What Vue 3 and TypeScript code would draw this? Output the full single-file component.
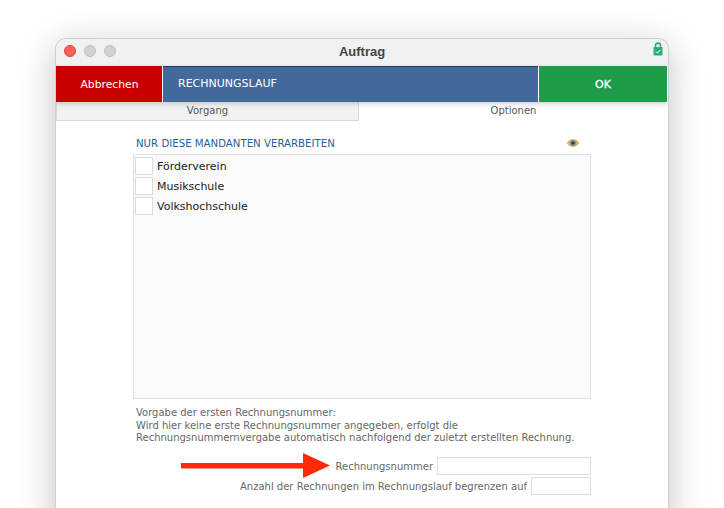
<script setup lang="ts">
const clients: string[] = ['Förderverein', 'Musikschule', 'Volkshochschule']
</script>

<template>
  <div class="page">
    <div class="window">
      <div class="titlebar">
        <div class="lights">
          <span class="light red"></span>
          <span class="light"></span>
          <span class="light"></span>
        </div>
        <div class="title">Auftrag</div>
        <svg class="lock" width="10" height="14" viewBox="0 0 10 14">
          <path d="M2.5 6V3.6a2.5 2.5 0 0 1 5 0V6" fill="none" stroke="#2fae78" stroke-width="1.6" />
          <rect x="0.5" y="5" width="9" height="8.6" rx="0.8" fill="#2fae78" />
          <path d="M3 9.6l1.5 1.5L7.2 8" fill="none" stroke="#fff" stroke-width="1" />
        </svg>
      </div>

      <div class="toolbar">
        <button class="cancel">Abbrechen</button>
        <div class="caption">RECHNUNGSLAUF</div>
        <button class="ok">OK</button>
      </div>

      <div class="tabs">
        <div class="tab inactive">Vorgang</div>
        <div class="tab">Optionen</div>
      </div>

      <div class="content">
        <div class="heading">
          <span>NUR DIESE MANDANTEN VERARBEITEN</span>
          <svg class="eye" width="14" height="10" viewBox="0 0 14 10">
            <path d="M0.5 5C3 1.6 5 1 7 1s4 .6 6.500 4C11 8.400 9 9 7 9S3 8.400 .5 5z" fill="#e0b36a" />
            <circle cx="7" cy="5" r="2.800" fill="#5d7f8c" />
            <circle cx="7" cy="5" r="1.200" fill="#26363d" />
          </svg>
        </div>

        <div class="list">
          <div v-for="client in clients" :key="client" class="row">
            <span class="check"></span>
            <span>{{ client }}</span>
          </div>
        </div>

        <p class="hint">
          Vorgabe der ersten Rechnungsnummer:<br />
          Wird hier keine erste Rechnungsnummer angegeben, erfolgt die<br />
          Rechnungsnummernvergabe automatisch nachfolgend der zuletzt erstellten Rechnung.
        </p>

        <div class="fields">
          <svg class="arrow" width="150" height="25" viewBox="0 0 150 25">
            <path d="M0 10h122V0l27 12.500L122 25V15.500H0z" fill="#ff2a06" />
          </svg>
          <div class="field">
            <label>Rechnungsnummer</label>
            <input class="input wide" type="text" />
          </div>
          <div class="field">
            <label>Anzahl der Rechnungen im Rechnungslauf begrenzen auf</label>
            <input class="input small" type="text" />
          </div>
        </div>
      </div>
    </div>
  </div>
</template>

<style>
html,
body {
  margin: 0;
  background: #fff;
}
</style>

<style scoped>
.page {
  width: 724px;
  height: 508px;
  overflow: hidden;
  padding: 38px 55px 0;
  box-sizing: border-box;
  font-family: "DejaVu Sans", Verdana, sans-serif;
}

.window {
  height: 510px;
  box-sizing: border-box;
  background: #fff;
  border-radius: 11px 11px 0 0;
  border: 1px solid #cfcfcf;
  border-bottom: none;
  box-shadow: 0 8px 36px rgba(0, 0, 0, 0.24);
  overflow: hidden;
  display: flex;
  flex-direction: column;
}

.titlebar {
  height: 27px;
  flex: none;
  background: #f0f1f3;
  display: flex;
  align-items: center;
  justify-content: center;
  position: relative;
}

.lights {
  position: absolute;
  left: 8px;
  top: 6px;
  display: flex;
  gap: 8px;
}

.light {
  width: 12px;
  height: 12px;
  box-sizing: border-box;
  border-radius: 50%;
  background: #d0d1d3;
  border: 0.5px solid #bcbcbc;
}

.light.red {
  background: #fe5f57;
  border-color: #e0443e;
}

.title {
  font-family: "Liberation Sans", Arial, sans-serif;
  font-size: 13px;
  font-weight: bold;
  color: #444;
  margin-bottom: 2px;
}

.lock {
  position: absolute;
  right: 5px;
  top: 3px;
}

.toolbar {
  height: 36px;
  flex: none;
  display: flex;
  background: #fff;
  box-shadow: 0 2px 5px rgba(0, 0, 0, 0.18);
  position: relative;
  z-index: 1;
  gap: 1px;
}

.cancel,
.ok {
  border: none;
  border-top: 1px solid transparent;
  padding: 0;
  color: #fff;
  font-family: "DejaVu Sans", sans-serif;
  font-size: 10.800px;
}

.cancel {
  width: 106px;
  background: #c80000;
  padding-left: 1px;
}

.caption {
  flex: 1;
  background: #43689b;
  border-top: 1px solid #1d3a66;
  color: #fff;
  font-size: 11px;
  line-height: 34px;
  padding-left: 15px;
}

.ok {
  width: 128px;
  background: #1f9c4a;
  margin-right: 1px;
  font-size: 11px;
  -webkit-text-stroke: 0.3px #fff;
}

.tabs {
  height: 19px;
  flex: none;
  display: flex;
}

.tab {
  flex: 1;
  text-align: center;
  font-size: 10px;
  line-height: 18px;
  color: #555;
}

.tab.inactive {
  flex: none;
  width: 303px;
  box-sizing: border-box;
  background: #f2f2f2;
  border: 1px solid #d8d8d8;
  border-width: 0 1px 1px 1px;
}

.content {
  padding: 15px 77px 0;
  font-size: 10px;
}

.heading {
  display: flex;
  justify-content: space-between;
  align-items: center;
  height: 14px;
  padding: 0 11px 0 3px;
  margin-bottom: 4px;
  color: #2a5e97;
  font-size: 10.200px;
}

.list {
  height: 241px;
  border: 1px solid #e0e0e0;
  background: #fafafa;
  padding: 1px;
}

.row {
  display: flex;
  align-items: center;
  height: 20px;
  font-size: 11px;
  color: #222;
  gap: 4px;
}

.check {
  width: 16px;
  height: 16px;
  background: #fff;
  border: 1px solid #dcdcdc;
}

.hint {
  margin: 8px 0 0 3px;
  font-size: 10px;
  line-height: 12.500px;
  color: #666;
}

.fields {
  position: relative;
  margin-top: 12.500px;
  display: flex;
  flex-direction: column;
  gap: 2px;
}

.arrow {
  position: absolute;
  left: 48px;
  top: -4px;
}

.field {
  height: 18px;
  display: flex;
  justify-content: flex-end;
  align-items: center;
  gap: 4px;
  color: #666;
  font-size: 10px;
}

.input {
  height: 18px;
  box-sizing: border-box;
  border: 1px solid #dcdcdc;
  background: #fff;
  padding: 0;
  outline: none;
}

.input.wide {
  width: 154px;
}

.input.small {
  width: 60px;
}
</style>
